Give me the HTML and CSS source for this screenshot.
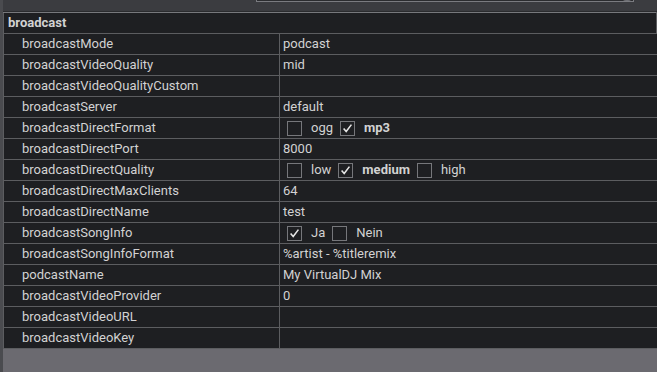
FILE: index.html
```html
<!DOCTYPE html>
<html>
<head>
<meta charset="utf-8">
<link rel="stylesheet" href="styles.css">
</head>
<body>
<div class="page">
  <div class="side"></div>
  <div class="main">
    <div class="topbar"><div class="searchbox"><span class="knob"></span></div></div>
    <table class="grid">
      <colgroup><col class="ck"><col class="cv"></colgroup>
      <tr class="head"><td colspan="2">broadcast</td></tr>
      <tr><td class="k">broadcastMode</td><td class="v">podcast</td></tr>
      <tr><td class="k">broadcastVideoQuality</td><td class="v">mid</td></tr>
      <tr><td class="k">broadcastVideoQualityCustom</td><td class="v"></td></tr>
      <tr><td class="k">broadcastServer</td><td class="v">default</td></tr>
      <tr><td class="k">broadcastDirectFormat</td><td class="v"><div class="opts">
        <span class="cb"></span><span class="ol">ogg</span>
        <span class="cb on"><svg viewBox="0 0 15 15"><path d="M3 7.5 L6 11 L12 3"/></svg></span><span class="ol b">mp3</span>
      </div></td></tr>
      <tr><td class="k">broadcastDirectPort</td><td class="v">8000</td></tr>
      <tr><td class="k">broadcastDirectQuality</td><td class="v"><div class="opts">
        <span class="cb"></span><span class="ol">low</span>
        <span class="cb on"><svg viewBox="0 0 15 15"><path d="M3 7.5 L6 11 L12 3"/></svg></span><span class="ol b">medium</span>
        <span class="cb"></span><span class="ol">high</span>
      </div></td></tr>
      <tr><td class="k">broadcastDirectMaxClients</td><td class="v">64</td></tr>
      <tr><td class="k">broadcastDirectName</td><td class="v">test</td></tr>
      <tr><td class="k">broadcastSongInfo</td><td class="v"><div class="opts">
        <span class="cb on"><svg viewBox="0 0 15 15"><path d="M3 7.5 L6 11 L12 3"/></svg></span><span class="ol">Ja</span>
        <span class="cb"></span><span class="ol">Nein</span>
      </div></td></tr>
      <tr><td class="k">broadcastSongInfoFormat</td><td class="v">%artist - %titleremix</td></tr>
      <tr><td class="k">podcastName</td><td class="v">My VirtualDJ Mix</td></tr>
      <tr><td class="k">broadcastVideoProvider</td><td class="v">0</td></tr>
      <tr><td class="k">broadcastVideoURL</td><td class="v"></td></tr>
      <tr><td class="k">broadcastVideoKey</td><td class="v"></td></tr>
    </table>
    <div class="rest"></div>
  </div>
</div>
</body>
</html>
```
FILE: styles.css
```css
html, body { margin: 0; padding: 0; }
body {
  width: 657px; height: 372px; overflow: hidden;
  background: #6b6a70;
  font-family: Roboto, "Liberation Sans", sans-serif;
  font-size: 13px;
  color: #d2d2d2;
}
.page { display: flex; height: 372px; }
.side { width: 3px; background: #4a4b4f; flex: none; }
.main { flex: 1; display: flex; flex-direction: column; min-width: 0; }
.topbar {
  height: 11px; background: #3b3c40; position: relative;
  border-bottom: 1px solid #2a2b2e;
}
.searchbox {
  position: absolute; left: 253px; width: 378px; top: -10px; height: 12px;
  background: #2b2c2f; border: 1px solid #7a7b80; border-top: none;
  box-sizing: border-box;
}
.knob {
  position: absolute; right: 1px; bottom: 0; width: 10px; height: 4px;
  border-radius: 0 0 6px 6px; background: #6e6f74;
}
.grid {
  border-collapse: collapse; width: 100%; table-layout: fixed;
  background: #1e1f22;
}
.ck { width: 276px; }
.grid td {
  height: 20px; padding: 0; border: 1px solid #5c5d60;
  white-space: nowrap; overflow: hidden; line-height: 20px;
}
.grid tr.head td { border-top: 1px solid #77787c; }
.head td { font-weight: bold; padding-left: 4px; }
.k { padding-left: 18px !important; }
.v { padding-left: 3px !important; border-right: none !important; }
.opts { display: flex; align-items: center; height: 20px; padding-left: 4px; }
.cb {
  width: 15px; height: 15px; box-sizing: border-box;
  border: 1px solid #76777b; display: inline-block; flex: none;
}
.cb svg { width: 13px; height: 13px; display: block; }
.cb path { fill: none; stroke: #e6e6e6; stroke-width: 1.8; }
.ol { margin: 0 7px 0 9px; }
.ol.b { font-weight: bold; }
.rest { flex: 1; }
```
